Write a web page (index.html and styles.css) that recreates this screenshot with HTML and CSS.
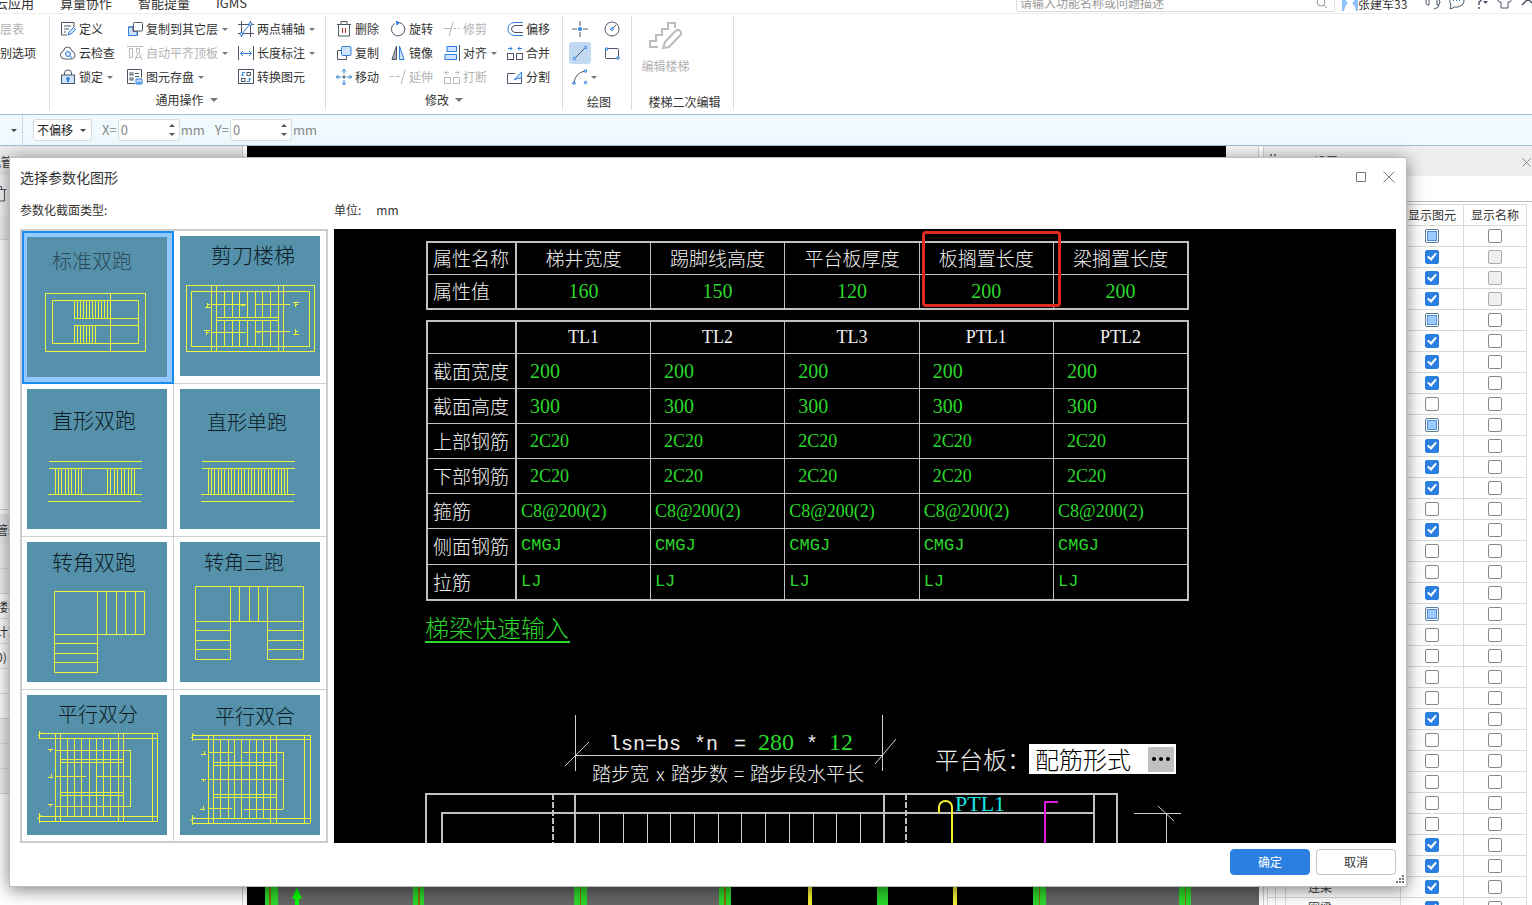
FILE: index.html
```html
<!DOCTYPE html>
<html lang="zh-CN">
<head>
<meta charset="utf-8">
<title>选择参数化图形</title>
<link rel="stylesheet" href="styles.css">
</head>
<body>
<div class="app">
  <header class="topbar">
    <nav class="tabs">
      <a href="#">云应用</a><a href="#">算量协作</a><a href="#">智能提量</a><a href="#">IGMS</a>
    </nav>
    <div class="topbar-right">
      <label class="search">
        <input type="text" placeholder="请输入功能名称或问题描述" aria-label="搜索">
        <svg width="12" height="12" viewBox="0 0 12 12"><circle cx="5" cy="5" r="4"/><path d="M8 8l3 3"/></svg>
      </label>
      <svg class="avatar" width="16" height="16" viewBox="0 0 16 16"><path fill="#8cc3fb" d="M0 0h16v16H0z"/><path fill="#fff" d="M3 0h10v3q-1 4-3 5q3 2 4 8H2q1-6 4-8q-2-1-3-5z"/></svg>
      <span class="user">张建军33</span>
      <button class="top-icon" aria-label="客服"><svg width="18" height="16" viewBox="0 0 18 16"><path d="M4 5q-3 0-2 4q1 3 3 2V5zM13 5q3 0 3 3t-3 3V5zM15 11q0 3-5 4M4 5q1-5 5-5t4 5"/></svg></button>
      <button class="top-icon" aria-label="消息"><svg width="18" height="16" viewBox="0 0 18 16"><path d="M2 15l1-4Q0 6 4 3q5-3 10 0q4 4 0 8q-4 3-8 2l-1 1z"/><path stroke="#2f7fdc" stroke-width="2" d="M5 6h1M8 6h1M11 6h1"/></svg></button>
      <button class="top-icon" aria-label="帮助"><svg width="18" height="16" viewBox="0 0 18 16"><path stroke-width="1.5" d="M3 4q1-3 4-3t3 3q0 2-3 4v3M7 13v2"/><path fill="#4c5668" stroke="none" d="M11 7h5l-2.500 3z"/></svg></button>
      <button class="top-icon" aria-label="皮肤"><svg width="18" height="16" viewBox="0 0 18 16"><path d="M5 1L1 5l2 3h2v6h7V8h2l2-3-4-4q-3 3-7 0z"/></svg></button>
      <button class="top-icon" aria-label="展开"><svg width="18" height="16" viewBox="0 0 18 16"><path stroke-width="1.500" d="M2 11l6-6 6 6"/></svg></button>
    </div>
  </header>

  <section class="ribbon">
    <div class="group group-level">
      <div class="grid">
        <button class="cmd off">楼层表</button>
        <button class="cmd">识别选项</button>
      </div>
    </div>

    <div class="group group-common">
      <div class="grid">
        <button class="cmd"><svg class="ic" viewBox="0 0 16 16"><path d="M14 6V1.500H1.500v12.500H7"/><path d="M4 5h7M4 8h5M4 11h2"/><path class="b f" d="M8 14l1-3 4.500-4.500 2 2L11 13z"/></svg>定义</button>
        <button class="cmd"><svg class="ic" viewBox="0 0 16 16"><path class="f" d="M6 10.500V6h-4.500v8.500h9V10z"/><path class="b" d="M10 10.500v4H1.500V6H6"/><rect class="w" x="6.500" y="1.500" width="9" height="8.500" rx="1"/></svg>复制到其它层<i class="caret"></i></button>
        <button class="cmd"><svg class="ic" viewBox="0 0 16 16"><path d="M3.500 0v16M12.500 0v16M0 3.500h16M0 12.500h16"/><path class="b" d="M3 14L13 2"/><circle class="b f" cx="3.500" cy="13" r="1.500"/><circle class="b f" cx="12.500" cy="3" r="1.500"/></svg>两点辅轴<i class="caret"></i></button>
        <button class="cmd"><svg class="ic" viewBox="0 0 16 16"><path d="M5 14h7q3.500-1 3-4t-3-4q-1-4-4.500-4T3.500 6Q0 7 .5 10.500T5 14z"/><circle class="b f" cx="8" cy="9" r="2.500"/><path class="b" d="M10 11l2 2"/></svg>云检查</button>
        <button class="cmd off"><svg class="ic" viewBox="0 0 16 16"><path d="M0 1.500h16M2.500 3.500h3v9h-3zM9.500 3.500h3v4M9.500 3.500V8M8 15l3-7h1l3 7M9 12.500h5"/></svg>自动平齐顶板<i class="caret"></i></button>
        <button class="cmd"><svg class="ic" viewBox="0 0 16 16"><path d="M.5 1v14M15.500 1v14"/><path class="b" d="M3 8.500h10M5 6L2.500 8.500 5 11M11 6l2.500 2.500L11 11"/></svg>长度标注<i class="caret"></i></button>
        <button class="cmd"><svg class="ic" viewBox="0 0 16 16"><path d="M4.500 6V4q0-3 3.500-3t3.500 3v2"/><rect class="f" x="1.500" y="6" width="13" height="8.500"/><path class="b" stroke-width="2" d="M8 9v4M6.500 10.500L8 9l1.500 1.500"/></svg>锁定<i class="caret"></i></button>
        <button class="cmd"><svg class="ic" viewBox="0 0 16 16"><path d="M8 14.500H.5V.5h14v8"/><rect x="3" y="4" width="3" height="2"/><rect x="3" y="9" width="3" height="2"/><path d="M8 4.500h4M8 7.500h4"/><path class="b f" d="M9 10h6v5H9zM11 15v-2h2v2"/></svg>图元存盘<i class="caret"></i></button>
        <button class="cmd"><svg class="ic" viewBox="0 0 16 16"><rect x=".5" y=".5" width="15" height="14"/><rect x="9" y="3.500" width="3.500" height="3"/><rect x="3.500" y="9.500" width="3.500" height="3"/><path class="b" d="M7 3.500H4.500V7M3 5.500L4.500 7 6 5.500M9 12.500h2.500V9M10 10.500L11.500 9 13 10.500"/></svg>转换图元</button>
      </div>
      <button class="group-name">通用操作<i class="caret big"></i></button>
    </div>

    <div class="group group-modify">
      <div class="grid">
        <button class="cmd"><svg class="ic" viewBox="0 0 16 16"><path d="M1 3.500h14M5 3V.5h6V3M2.500 4v11h11V4"/><path stroke="#c22f2f" d="M6.500 7v5M9.500 7v5"/></svg>删除</button>
        <button class="cmd"><svg class="ic" viewBox="0 0 16 16"><path d="M9 1.500A6.700 6.700 0 1 1 4.500 2.500"/><path class="b" d="M6.500 0L9 1.800 7 4z" fill="#2f7fdc"/></svg>旋转</button>
        <button class="cmd off"><svg class="ic" viewBox="0 0 16 16"><path d="M0 7.500h7M10 7.500h2M14 7.500h2M5 15L9 1"/></svg>修剪</button>
        <button class="cmd"><svg class="ic" viewBox="0 0 16 16"><path class="b" d="M16 1.500H7Q1 2.500 1 8t6 6.500h9"/><path d="M16 4.500H8Q4.500 5 4.500 8T8 11.500h8"/></svg>偏移</button>
        <button class="cmd"><svg class="ic" viewBox="0 0 16 16"><path d="M5 5.500H1.500v9h9V11"/><rect class="b f" x="5.500" y="1.500" width="9.500" height="9" rx="1"/></svg>复制</button>
        <button class="cmd"><svg class="ic" viewBox="0 0 16 16"><path fill="#a9afb8" d="M6.500 1v13.500H2z"/><path class="b f" d="M9.500 1v13.500H14z"/></svg>镜像</button>
        <button class="cmd"><svg class="ic" viewBox="0 0 16 16"><path d="M15.500 0v16"/><rect class="b f" x="3" y="1.500" width="9.500" height="5"/><rect class="b f" x="1" y="9.500" width="11.500" height="5"/></svg>对齐<i class="caret"></i></button>
        <button class="cmd"><svg class="ic" viewBox="0 0 16 16"><rect x=".5" y="8.500" width="6" height="6"/><rect x="9.500" y="8.500" width="6" height="6"/><path class="b" d="M1 3.500h4M3 1.500l2 2-2 2M15 3.500h-4M13 1.500l-2 2 2 2"/></svg>合并</button>
        <button class="cmd"><svg class="ic" viewBox="0 0 16 16"><path d="M8 6v4M6 8h4"/><path class="b" d="M8 0v5M8 11v5M0 8h5M11 8h5M6 2.500l2-2 2 2M6 13.500l2 2 2-2M2.500 6l-2 2 2 2M13.500 6l2 2-2 2"/></svg>移动</button>
        <button class="cmd off"><svg class="ic" viewBox="0 0 16 16"><path d="M0 7.500h4M6 7.500h4M11 15l4-14"/></svg>延伸</button>
        <button class="cmd off"><svg class="ic" viewBox="0 0 16 16"><rect x=".5" y="8.500" width="6" height="6"/><rect x="9.500" y="8.500" width="6" height="6"/><path d="M1 3.500h4M3 1.500l-2 2 2 2M15 3.500h-4M13 1.500l2 2-2 2"/></svg>打断</button>
        <button class="cmd"><svg class="ic" viewBox="0 0 16 16"><path d="M8 4.500H.5v10h14V9"/><path class="b f" d="M7 11L14.500 3v6l-4 .5z"/></svg>分割</button>
      </div>
      <button class="group-name">修改<i class="caret big"></i></button>
    </div>

    <div class="group group-draw">
      <div class="grid">
        <button class="tool" aria-label="点"><svg class="ic" viewBox="0 0 16 16"><path d="M8 0v5M8 11v5M0 8h5M11 8h5"/><circle cx="8" cy="8" r="2" fill="#2f7fdc" stroke="none"/></svg></button>
        <button class="tool" aria-label="圆"><svg class="ic" viewBox="0 0 16 16"><circle cx="8" cy="8" r="7"/><path d="M8 8l4-4"/><circle class="b f" cx="8" cy="8" r="1.300"/></svg></button>
        <button class="tool on" aria-label="直线"><svg class="ic" viewBox="0 0 16 16"><path d="M2 14L14 2"/><circle class="b f" cx="2.500" cy="13.500" r="1.300"/><circle class="b f" cx="13.500" cy="2.500" r="1.300"/></svg></button>
        <button class="tool" aria-label="矩形"><svg class="ic" viewBox="0 0 16 16"><rect x="1.500" y="3.500" width="13" height="10" rx="1"/><circle class="b f" cx="2.500" cy="4" r="1.300"/><circle class="b f" cx="14" cy="13" r="1.300"/></svg></button>
        <button class="tool arc" aria-label="弧线"><svg class="ic" viewBox="0 0 16 16"><path d="M2 14Q3 4 13 2"/><circle class="b f" cx="2" cy="14" r="1.300"/><circle class="b f" cx="13.500" cy="2" r="1.300"/><circle class="b f" cx="13.500" cy="13.500" r="1.300"/></svg><i class="caret"></i></button>
      </div>
      <span class="group-name low">绘图</span>
    </div>

    <div class="group group-stair">
      <button class="bigcmd"><svg width="34" height="30" viewBox="0 0 34 30"><path d="M10 27H2v-6h6v-6h6V9h6V3h7v5"/><path d="M17 22L28 10.500q2-1.500 4 .5t.5 4L21 27l-6 1z"/></svg>编辑楼梯</button>
      <span class="group-name low">楼梯二次编辑</span>
    </div>
  </section>

  <section class="options">
    <div class="opt-first"><i class="caret dark"></i></div>
    <div class="select"><select aria-label="偏移方式"><option>不偏移</option></select><i class="caret dark"></i></div>
    <label class="num">X=<span class="box"><input type="text" value="0"><span class="spin"><i class="up"></i><i class="down"></i></span></span>mm</label>
    <label class="num">Y=<span class="box"><input type="text" value="0"><span class="spin"><i class="up"></i><i class="down"></i></span></span>mm</label>
  </section>

  <main class="work">
    <aside class="left-pane">
      <h2>图纸管理</h2>
      <div class="lp-tools"><svg width="14" height="16" viewBox="0 0 14 16"><path d="M0 3.500h12.500M10.500 4v11H0M7.500 3V.5H0"/></svg></div>
      <div class="lp-row gray"></div>
      <div class="lp-list"></div>
      <h2 class="second">构件管理</h2>
      <div class="lp-row gray"></div>
      <div class="lp-row gray"></div>
      <div class="lp-row">楼梯</div>
      <div class="lp-row">计算</div>
      <div class="lp-row">0)</div>
      <div class="lp-row"></div>
      <div class="lp-row"></div>
      <div class="lp-row gray"></div>
      <div class="lp-row gray"></div>
      <div class="lp-row gray"></div>
    </aside>
    <div class="model">
      <div class="model-tab"></div>
      <svg class="model-plan" width="1012" height="19" viewBox="0 0 1012 19">
        <path fill="#666" d="M31 0h135v19H31zM177 0h150v19H177zM340 0h132v19H340zM799 0h133v19H799zM944 0h68v19h-68z"/>
        <path fill="#2bd62b" d="M18 0h13v19H18zM166 0h11v19h-11zM327 0h13v19h-13zM472 0h12v19h-12zM630 0h11v19h-11zM786 0h13v19h-13zM932 0h12v19h-12z"/>
        <path fill="#8a6a10" d="M22 0h2v19h-2zM171 0h2v19h-2zM333 0h1v19h-1zM477 0h2v19h-2zM792 0h1v19h-1zM938 0h1v19h-1z"/>
        <path fill="#f4ee35" d="M561 0h4v19h-4zM706 0h4v19h-4z"/>
        <path fill="#0f0" d="M50 1l5 12h-3v6h-4v-6h-3z"/>
      </svg>
    </div>
    <aside class="right-pane">
      <div class="rp-head"><svg width="8" height="8" viewBox="0 0 8 8"><path fill="#777" d="M0 0h2v2H0zM4 0h2v2H4zM0 4h2v2H0zM4 4h2v2H4z"/></svg><h2>显示设置</h2><button aria-label="关闭面板"><svg width="9" height="9" viewBox="0 0 9 9"><path d="M.5.5l8 8M8.500.5l-8 8"/></svg></button></div>
      <table class="layers">
        <colgroup><col class="c-a"><col class="c-b"><col class="c-name"><col class="c-chk"><col class="c-chk"></colgroup>
        <thead><tr><th></th><th></th><th></th><th>显示图元</th><th>显示名称</th></tr></thead>
        <tbody id="layer-rows"></tbody>
      </table>
    </aside>
  </main>
</div>

<div class="dialog" role="dialog" aria-labelledby="dlg-title">
  <header class="dlg-head">
    <h1 id="dlg-title">选择参数化图形</h1>
    <button aria-label="最大化"><svg width="12" height="12" viewBox="0 0 12 12"><path d="M1.500 1.500h9v9h-9z"/></svg></button>
    <button aria-label="关闭"><svg width="12" height="12" viewBox="0 0 12 12"><path d="M.5.5l11 11M11.500.5l-11 11"/></svg></button>
  </header>
  <div class="dlg-body">
    <p class="caption">参数化截面类型:</p>
    <p class="caption">单位:<span>mm</span></p>

    <div class="gallery">
      <button class="shape on"><svg viewBox="0 0 140 140"><text class="s20" x="25" y="32">标准双跑</text><path d="M18.500 56.500h100v58h-100zM25.500 63.500h86v43h-86zM83.500 56v59M47 81.500h65M47 88.500h65M47.500 63v18M50.500 63v18M53.500 63v18M56.500 63v18M59.500 63v18M62.500 63v18M65.500 63v18M68.500 63v18M71.500 63v18M74.500 63v18M77.500 63v18M80.500 63v18M47.500 88v18M50.500 88v18M53.500 88v18M56.500 88v18M59.500 88v18M62.500 88v18M65.500 88v18M68.500 88v18"/></svg></button>
      <button class="shape"><svg viewBox="0 0 140 140"><text class="s21" x="31" y="27">剪刀楼梯</text><path d="M6.500 49.500h128v66h-128zM11.500 55.500h118v55h-118zM31.500 49v67M36.500 49v67M98.500 49v67M103.500 49v67M37 81.500h61M37 84.500h61M44.500 55v26M52.500 55v26M59.500 55v26M67.500 55v26M75.500 55v26M82.500 55v26M90.500 55v26M44.500 85v26M52.500 85v26M59.500 85v26M67.500 85v26M75.500 85v26M82.500 85v26M90.500 85v26M31 68.500h35M75 68.500h35M31 96.500h35M75 95.500h35M61 69.500h4M77 96.500h3"/><path d="M27.500 67v4M28 68.500h2M25 71.500h6M113 66.500h6M115.500 66v5M116 68.500h2M24 94.500h6M26.500 94v5M27 96.500h2M115.500 93v5M116 95.500h2M113 98.500h6"/></svg></button>
      <button class="shape"><svg viewBox="0 0 140 140"><text class="s21" x="25" y="39">直形双跑</text><path d="M22 72.500h93M22 79.500h93M21 105.500h94M21 112.500h93M28.500 79v26M31.500 79v26M34.500 79v26M38.500 79v26M41.500 79v26M44.500 79v26M48.500 79v26M51.500 79v26M54.500 79v26M80.500 79v26M83.500 79v26M87.500 79v26M90.500 79v26M94.500 79v26M97.500 79v26M101.500 79v26M104.500 79v26M107.500 79v26"/></svg></button>
      <button class="shape"><svg viewBox="0 0 140 140"><text class="s20" x="27" y="41">直形单跑</text><path d="M22 72.500h93M22 79.500h93M21 105.500h94M21 112.500h93M28.500 79v26M31.500 79v26M34.500 79v26M38.500 79v26M41.500 79v26M44.500 79v26M48.500 79v26M51.500 79v26M54.500 79v26M58.500 79v26M61.500 79v26M64.500 79v26M68.500 79v26M71.500 79v26M74.500 79v26M78.500 79v26M81.500 79v26M84.500 79v26M88.500 79v26M91.500 79v26M94.500 79v26M98.500 79v26M101.500 79v26M104.500 79v26M107.500 79v26"/></svg></button>
      <button class="shape"><svg viewBox="0 0 140 140"><text class="s21" x="25" y="28">转角双跑</text><path d="M27.500 49.500h90v43h-90zM27.500 92.500h43v38h-43zM70.500 49v43M79.500 49v43M89.500 49v43M98.500 49v43M108.500 49v43M27 101.500h43M27 111.500h43M27 120.500h43"/></svg></button>
      <button class="shape"><svg viewBox="0 0 140 140"><text class="s20" x="24" y="28">转角三跑</text><path d="M15.500 44.500h108v35h-108zM15.500 79.500h35v38h-35zM87.500 79.500h36v38h-36zM50.500 44v35M59.500 44v35M69.500 44v35M78.500 44v35M87.500 44v35M15 88.500h35M15 98.500h35M15 107.500h35M87 88.500h36M87 98.500h36M87 107.500h36"/></svg></button>
      <button class="shape"><svg viewBox="0 0 140 140"><text class="s20" x="31" y="27">平行双分</text><path d="M12 38.500h119M12 43.500h119M12 121.500h119M12 126.500h119M125.500 38v88M130.500 38v88M28.500 38v88M33.500 38v88M91.500 38v88M96.500 38v88M40.500 43v78M47.500 43v78M54.500 43v78M62.500 43v78M69.500 43v78M76.500 43v78M83.500 43v78M33 64.500h63M33 67.500h63M33 97.500h63M33 100.500h63M28 55.500h75M103.500 55v57M28 111.500h75M28 81.500h31M69 81.500h34M12.500 36v8M11 41l4-4M12.500 118v10M10 124l5-4M21 54.500h5M23.500 54v3M21 82.500h5M24.500 79v3M21 109.500h5M23.500 109v3"/></svg></button>
      <button class="shape"><svg viewBox="0 0 140 140"><text class="s20" x="35" y="29">平行双合</text><path d="M12 40.500h118M12 44.500h118M12 123.500h118M12 128.500h118M124.500 40v88M130.500 40v88M28.500 40v88M33.500 40v88M90.500 40v88M96.500 40v88M40.500 44v79M48.500 44v79M54.500 44v79M61.500 44v79M69.500 44v79M76.500 44v79M83.500 44v79M33 67.500h63M33 70.500h63M33 99.500h63M33 102.500h63M28 57.500h25M63 57.500h40M103.500 57v57M28 84.500h75M28 113.500h24M64 114.500h39M12.500 38v8M11 43l4-4M12.500 120v10M10 126l5-4M21 59.500h5M24.500 56v3M21 84.500h5M23.500 84v3M20 114.500h5M23.500 111v3"/></svg></button>
    </div>

    <div class="cad">
      <div class="mark"></div>
      <table class="props top">
        <colgroup><col class="p-name"><col><col><col><col><col></colgroup>
        <tbody>
          <tr class="head"><th>属性名称</th><th>梯井宽度</th><th>踢脚线高度</th><th>平台板厚度</th><th>板搁置长度</th><th>梁搁置长度</th></tr>
          <tr class="mid"><th>属性值</th><td>160</td><td>150</td><td>120</td><td>200</td><td>200</td></tr>
        </tbody>
      </table>
      <table class="props">
        <colgroup><col class="p-name"><col><col><col><col><col></colgroup>
        <tbody>
          <tr class="head code"><th></th><th>TL1</th><th>TL2</th><th>TL3</th><th>PTL1</th><th>PTL2</th></tr>
          <tr><th>截面宽度</th><td>200</td><td>200</td><td>200</td><td>200</td><td>200</td></tr>
          <tr><th>截面高度</th><td>300</td><td>300</td><td>300</td><td>300</td><td>300</td></tr>
          <tr class="bar"><th>上部钢筋</th><td>2C20</td><td>2C20</td><td>2C20</td><td>2C20</td><td>2C20</td></tr>
          <tr class="bar"><th>下部钢筋</th><td>2C20</td><td>2C20</td><td>2C20</td><td>2C20</td><td>2C20</td></tr>
          <tr class="tight bar"><th>箍筋</th><td>C8@200(2)</td><td>C8@200(2)</td><td>C8@200(2)</td><td>C8@200(2)</td><td>C8@200(2)</td></tr>
          <tr class="tight mono"><th>侧面钢筋</th><td>CMGJ</td><td>CMGJ</td><td>CMGJ</td><td>CMGJ</td><td>CMGJ</td></tr>
          <tr class="tight mono"><th>拉筋</th><td>LJ</td><td>LJ</td><td>LJ</td><td>LJ</td><td>LJ</td></tr>
        </tbody>
      </table>
      <a class="quick" href="#">梯梁快速输入</a>
      <div class="plan">
        <svg width="1062" height="143" viewBox="0 0 1062 143">
          <g class="thin"><path d="M241.500 15v56M548.500 15v56M241 55.500h307M231 66l24-24M541 64l21-25"/></g>
          <g class="formula"><text x="275" y="50">lsn=bs</text><text x="360" y="50">*n</text><text x="400" y="50">=</text><text class="val" x="424" y="50">280</text><text x="472" y="50">*</text><text class="val" x="495" y="50">12</text></g>
          <g class="note"><text x="258" y="81">踏步宽</text><text x="322" y="81">x</text><text x="337" y="81">踏步数</text><text x="400" y="81">=</text><text x="416" y="81">踏步段水平长</text></g>
          <g class="thick"><path d="M92 143V94h691v49M108 143v-30h653M760 94v49M241 94v49M550 94v49"/><path stroke-dasharray="6 2" d="M219 94v49M572 94v49"/></g>
          <g class="thin"><path d="M265.500 114v29M289.500 114v29M313.500 114v29M336.500 114v29M360.500 114v29M384.500 114v29M407.500 114v29M431.500 114v29M455.500 114v29M479.500 114v29M502.500 114v29M526.500 114v29M800 113.500h47M824 106l16 15M832.500 114v29"/></g>
          <path class="hook" d="M605 113v-6a6.500 6 0 0 1 13 0v36"/>
          <path class="rebar" d="M724 102h-13v41"/>
          <text class="beam" x="621" y="111">PTL1</text>
        </svg>
        <div class="plate"><label for="plate-form">平台板：</label><span class="plate-box"><input id="plate-form" type="text" value="配筋形式"><button aria-label="选择配筋形式"><svg width="20" height="6" viewBox="0 0 20 6"><circle cx="3" cy="3" r="2"/><circle cx="10" cy="3" r="2"/><circle cx="17" cy="3" r="2"/></svg></button></span></div>
      </div>
    </div>
  </div>
  <footer class="dlg-foot">
    <button class="btn primary">确定</button>
    <button class="btn">取消</button>
    <svg class="grip" width="8" height="8" viewBox="0 0 8 8"><path d="M6 0h2v2H6zM3 3h2v2H3zM6 3h2v2H6zM0 6h2v2H0zM3 6h2v2H3zM6 6h2v2H6z"/></svg>
  </footer>
</div>
<script src="layers.js"></script>
</body>
</html>
```
FILE: styles.css
```css
* { box-sizing: border-box; }
html, body { height: 100%; }
body {
  margin: 0;
  overflow: hidden;
  position: relative;
  background: #fff;
  color: #333;
  font: 12px/18px "Noto Sans CJK SC", sans-serif;
}
h1, h2, p { margin: 0; font-weight: 400; }
button, input, select { font: inherit; color: inherit; margin: 0; padding: 0; border: 0; background: none; }
a { color: inherit; text-decoration: none; }
table { border-collapse: collapse; table-layout: fixed; }
th { font-weight: 400; }
svg { flex: none; }

.app { display: flex; flex-direction: column; height: 100%; overflow: hidden; }

/* top bar */
.topbar { display: flex; justify-content: space-between; align-items: flex-end; height: 14px; overflow: hidden; border-bottom: 1px solid #eee; flex: none; }
.tabs { display: flex; gap: 26px; margin-left: -5px; font-size: 13px; line-height: 20px; }
.topbar-right { display: flex; align-items: flex-end; margin-right: -12px; }
.search { display: flex; align-items: center; width: 319px; height: 18px; margin: 0 7px 1px 0; padding: 0 6px 0 3px; border: 1px solid #ddd; border-radius: 3px; }
.search input { flex: 1; min-width: 0; height: 16px; outline: 0; }
.search input::placeholder { color: #999; opacity: 1; }
.search svg { fill: none; stroke: #999; }
.avatar { margin-bottom: 2px; }
.user { line-height: 18px; width: 66px; }
.top-icon { width: 24px; height: 16px; margin-bottom: 3px; }
.top-icon svg { display: block; fill: none; stroke: #4c5668; }

/* ribbon */
.ribbon { display: flex; flex: none; height: 100px; padding: 2px 0 4px; }
.group { display: flex; flex-direction: column; align-items: center; border-right: 1px solid #dcdcdc; overflow: hidden; }
.grid { display: grid; grid-auto-rows: 24px; align-self: stretch; }
.cmd { display: flex; align-items: center; gap: 3px; height: 24px; margin-top: 1px; white-space: nowrap; }
.off { color: #b3b3b3; }
.ic { width: 16px; height: 16px; fill: none; stroke: #4c5668; }
.off .ic { stroke: #b9b9b9; }
.ic .b { stroke: #2f7fdc; }
.ic .f { fill: #cfe3fb; }
.ic .w { fill: #fff; }
.caret { border: 3px solid transparent; border-top-color: #777; border-bottom: 0; margin-left: 1px; }
.caret.big { border-width: 4px 4px 0; margin-left: 0; }
.caret.dark { border-top-color: #444; }
.group-name { display: flex; align-items: center; gap: 6px; margin-top: 2px; white-space: nowrap; line-height: 20px; }
.group-name.low { margin-top: 4px; }
.group-level { width: 50px; align-items: flex-start; }
.group-level .grid { margin-left: -12px; }
.group-common { width: 276px; padding-left: 10px; }
.group-common .grid { grid-template-columns: 67px 111px auto; }
.group-common .group-name { margin-right: 12px; }
.group-modify { width: 237px; padding-left: 10px; }
.group-modify .grid { grid-template-columns: 54px 54px 63px auto; }
.group-modify .group-name { margin-right: 10px; }
.group-draw { width: 69px; padding: 0 6px; }
.group-draw .grid { grid-template-columns: 22px 22px; column-gap: 10px; }
.group-draw .group-name { margin-left: 4px; }
.group-stair { width: 102px; justify-content: space-between; }
.group-stair .group-name { margin: 0 0 -2px 4px; }
.tool { display: flex; align-items: center; justify-content: center; height: 22px; margin-top: 2px; border-radius: 3px; }
.tool.on { background: #c1daf1; }
.tool.arc { width: 30px; gap: 2px; }
.bigcmd { display: flex; flex-direction: column; align-items: center; gap: 7px; margin: 4px 34px 0 0; color: #b3b3b3; }
.bigcmd svg { fill: none; stroke: #bcbcbc; stroke-width: 2; }

/* option bar */
.options { display: flex; align-items: center; flex: none; height: 32px; border: solid #9fc0dc; border-width: 1px 0; background: #f0f9fd; color: #888; font-size: 13px; }
.opt-first { display: flex; align-items: center; justify-content: flex-end; width: 23px; height: 30px; padding-right: 5px; border-right: 1px solid #c6dcec; }
.select { display: flex; align-items: center; width: 59px; height: 22px; margin-left: 10px; padding: 0 5px 0 3px; border: 1px solid #d4dce2; border-radius: 3px; background: #fff; color: #222; font-size: 12px; }
.select select { appearance: none; flex: 1; min-width: 0; outline: 0; }
.num { display: flex; align-items: center; margin-left: 10px; }
.box { display: flex; align-items: center; width: 62px; height: 22px; margin: 0 1px; padding: 0 4px 0 2px; border: 1px solid #d4dce2; border-radius: 3px; background: #fff; }
.box input { flex: 1; min-width: 0; outline: 0; }
.spin { display: flex; flex-direction: column; gap: 6px; }
.up, .down { border: 3px solid transparent; }
.up { border-top: 0; border-bottom-color: #555; }
.down { border-bottom: 0; border-top-color: #555; }

/* workspace */
.work { display: flex; flex: 1; min-height: 0; overflow: hidden; }
.left-pane { flex: none; width: 243px; margin-right: 4px; border-right: 1px solid #ccc; overflow: hidden; }
.left-pane h2 { height: 29px; line-height: 31px; font-size: 12px; background: #e9e9ec; text-indent: -23px; }
.lp-tools { height: 40px; padding-top: 11px; background: #f5f5f5; }
.lp-tools svg { margin-left: -6px; fill: none; stroke: #4c5668; }
.lp-list { height: 270px; border-bottom: 1px solid #ccc; }
.left-pane h2.second { height: 34px; text-indent: -28px; border-top: 4px solid #fff; }
.lp-row { height: 25px; line-height: 25px; text-indent: -4px; border-bottom: 1px solid #ddd; }
.lp-row.gray { background: #f0f0f0; }
.model { display: flex; flex-direction: column; justify-content: space-between; flex: 1; min-width: 0; background: #000; overflow: hidden; }
.model-tab { align-self: flex-end; width: 33px; height: 40px; background: #f7f7f8; border-right: 1px solid #ccc; }
.model-plan { display: block; }
.right-pane { flex: none; width: 269px; margin-left: 4px; border-left: 1px solid #ccc; overflow: hidden; background: linear-gradient(#bbb, #bbb) 0 55px / 100% 1px no-repeat; }
.rp-head { display: flex; align-items: flex-start; gap: 12px; height: 30px; padding: 8px 0 0 6px; background: #eeeef0; }
.rp-head h2 { flex: 1; font-size: 12px; line-height: 15px; }
.rp-head button { width: 10px; height: 14px; }
.rp-head button svg { display: block; margin-top: 3px; fill: none; stroke: #888; }
.layers { width: 260px; margin: 28px 0 0 3px; border-left: 1px solid #ddd; }
.layers th, .layers td { height: 21px; padding: 0; border: 1px solid #d9d9d9; text-align: center; line-height: 18px; white-space: nowrap; }
.layers td:nth-child(3) { text-align: left; padding-left: 22px; }
.c-a { width: 8px; }
.c-b { width: 10px; }
.c-name { width: 115px; }
.c-chk { width: 63px; }
.layers input { appearance: none; display: block; width: 14px; height: 14px; margin: 0 auto; border: 1px solid #888; border-radius: 2px; background: #fff; }
.layers input:checked { border-color: #2b7fe0; background: #2b7fe0; }
.layers input:checked::after { content: ""; display: block; width: 10px; height: 8px; margin: 2px 1px; background: #fff; clip-path: polygon(0 50%, 15% 35%, 38% 60%, 82% 0, 100% 8%, 42% 100%); }
.layers input:disabled { background: #efefef; border-color: #aaa; }
.layers input.part { border-color: #5f7f95; background: #9bcbff; box-shadow: inset 0 0 0 1px #fff, inset 0 0 0 2px #4d8fd8; }

/* dialog */
.dialog { position: absolute; inset: 157px 125px 18px 9px; display: flex; flex-direction: column; background: #fff; border: 1px solid #bcbcbc; box-shadow: 0 3px 16px rgba(0, 0, 0, .5); }
.dlg-head { display: flex; align-items: center; gap: 16px; height: 37px; padding: 0 11px 0 10px; flex: none; }
.dlg-head h1 { flex: 1; font-size: 14px; line-height: 20px; }
.dlg-head button { width: 12px; height: 12px; }
.dlg-head svg { display: block; fill: none; stroke: #777; }
.dlg-body { display: grid; grid-template-columns: 308px minmax(0, 1fr); grid-template-rows: 34px minmax(0, 1fr); column-gap: 6px; flex: 1; min-height: 0; padding: 0 10px; }
.caption { padding-top: 6px; }
.caption span { margin-left: 15px; }
.gallery { display: grid; grid-template-columns: 152px 152px; align-content: start; border: 2px solid #ccc; background: #fff; overflow: hidden; }
.shape { display: block; height: 153px; padding: 5px 6px 7px 5px; border: solid #d0d0d0; border-width: 0 1px 1px 0; }
.shape:nth-child(2n) { padding: 5px 6px 7px 6px; border-right: 0; }
.shape svg { display: block; width: 140px; height: 140px; background: #5591aa; }
.shape path { fill: none; stroke: #edf63c; }
.shape text { fill: #0c1c24; font-weight: 300; }
.s20 { font-size: 20px; }
.s21 { font-size: 21px; }
.shape.on { padding: 3px 5px 5px 3px; border: 2px solid #1a8cf0; background: #90c8ff; }
.shape.on text { fill: #2c4a58; }

.cad { position: relative; background: #000; overflow: hidden; color: #f0f0f0; font-size: 19px; font-weight: 300; }
.mark { position: absolute; left: 588px; top: 2px; width: 139px; height: 76px; border: 3px solid #e02b20; border-radius: 4px; }
.props { width: 763px; margin: 10px 0 0 92px; border: 2px solid #c0c0c0; }
.props.top { margin-top: 12px; }
.props th, .props td { height: 35px; padding: 0; border: 1px solid #c0c0c0; line-height: 24px; white-space: nowrap; }
.props th { font-weight: 300; }
.props .head > * { height: 32px; }
.p-name { width: 89px; }
.props th:first-child { text-align: left; padding-left: 5px; border-right-width: 2px; }
.props td { padding-left: 13px; color: #2bd82b; font-family: "Liberation Serif", serif; font-size: 20px; font-weight: 400; }
.props .mid td { padding-left: 0; text-align: center; }
.props .code th, .props .bar td { font-family: "Liberation Serif", serif; font-size: 18px; font-weight: 400; }
.props .tight td { padding-left: 4px; }
.props .mono td { height: 36px; font-family: "Liberation Mono", monospace; font-size: 17px; }
.quick { display: block; width: 145px; margin: 12px 0 0 91px; color: #2bd82b; font-size: 24px; line-height: 28px; border-bottom: 2px solid #2bd82b; white-space: nowrap; }
.plan { position: absolute; left: 0; bottom: 0; }
.plan svg { display: block; fill: none; }
.thin { stroke: #d0d0d0; }
.thick { stroke: #c0c0c0; stroke-width: 2; }
.formula { fill: #eee; font: 20px "Liberation Mono", monospace; }
.formula .val { fill: #2bd82b; font: 24px "Liberation Serif", serif; }
.note { fill: #f0f0f0; font-size: 19px; }
.hook { stroke: #f8f32b; stroke-width: 2; }
.rebar { stroke: #e01be0; stroke-width: 2; }
.beam { fill: #19e6e6; font: 22px "Liberation Serif", serif; }
.plate { position: absolute; left: 601px; top: 44px; display: flex; align-items: center; font-size: 24px; line-height: 28px; white-space: nowrap; }
.plate label { width: 94px; }
.plate-box { display: flex; align-items: center; width: 147px; height: 30px; padding: 0 2px 0 6px; background: #fff; color: #000; }
.plate-box input { flex: 1; min-width: 0; height: 28px; outline: 0; }
.plate-box button { display: flex; align-items: center; justify-content: center; width: 26px; height: 25px; background: #c0c0c0; }
.plate .plate-box svg { fill: #000; }

.dlg-foot { position: relative; display: flex; justify-content: flex-end; gap: 6px; height: 43px; padding: 6px 10px 0; flex: none; }
.btn { width: 80px; height: 26px; border: 1px solid #c4c4c4; border-radius: 4px; background: #fff; }
.btn.primary { border-color: #2b7fe0; background: #2b7fe0; color: #fff; }
.grip { position: absolute; right: 2px; bottom: 3px; fill: #777; }
```
FILE: layers.js
```js
// p: partly shown, c: shown, -: hidden
const shown = 'pcccpccc-pccc-c--cp----c-----cccc';
const names = { 31: '连梁', 32: '圈梁' };

document.getElementById('layer-rows').innerHTML = [...shown].map((state, i) => {
  const name = names[i] || '';
  const graphic = `<input type="checkbox" aria-label="显示图元" ${state === 'c' ? 'checked' : ''} ${state === 'p' ? 'class="part"' : ''}>`;
  const label = `<input type="checkbox" aria-label="显示名称" ${i > 0 && i < 4 ? 'disabled' : ''}>`;
  return `<tr><td></td><td></td><td>${name}</td><td>${graphic}</td><td>${label}</td></tr>`;
}).join('');
```
